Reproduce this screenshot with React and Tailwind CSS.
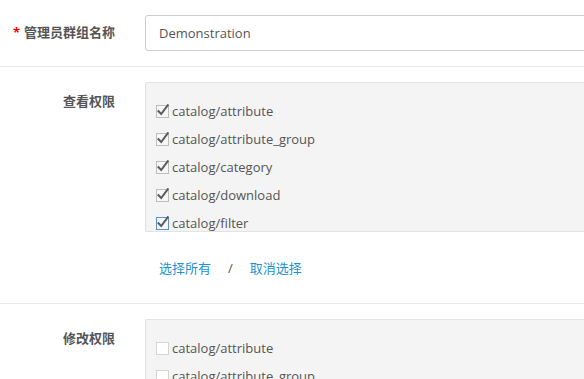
import React from "react";

const items = [
  "catalog/attribute",
  "catalog/attribute_group",
  "catalog/category",
  "catalog/download",
  "catalog/filter",
  "catalog/information",
];

function Check({ checked, focus }) {
  return (
    <svg width="14" height="14" viewBox="0 0 14 14" className="shrink-0">
      <rect
        x="0.5"
        y="1.5"
        width="12"
        height="12"
        fill={checked ? "#f6f6f6" : "#ffffff"}
        stroke={focus ? "#5b8fd6" : checked ? "#bdbdbd" : "#d4d4d4"}
        strokeWidth="1"
      />
      {checked && (
        <path
          d="M2.5 7.2 L5.2 10 L11.8 1.2"
          fill="none"
          stroke="#5a5a5a"
          strokeWidth="2"
          strokeLinecap="square"
        />
      )}
    </svg>
  );
}

function Box({ checked }) {
  return (
    <div className="h-[150px] overflow-hidden rounded-[2px] border border-[#e3e3e3] bg-[#f4f4f4] pl-[10px] pt-[18px]">
      <div className="flex flex-col gap-[8px]">
        {items.map((t, i) => (
          <div key={t} className="flex h-[20px] items-center gap-[2px] text-[13px] text-[#555]">
            <Check checked={checked} focus={checked && i === 4} />
            <span className="leading-[20px]">{t}</span>
          </div>
        ))}
      </div>
    </div>
  );
}

export default function App() {
  return (
    <div
      className="h-[379px] w-[584px] overflow-hidden bg-white"
      style={{ fontFamily: '"Open Sans", "Noto Sans CJK SC", sans-serif' }}
    >
      <div className="w-[900px]">
        <div className="flex border-b border-[#ebebeb] py-[15px]">
          <div className="flex w-[130px] items-center justify-end pr-[15px] text-[13px] font-bold text-[#555]">
            <span className="mr-[4px] text-[#f00]">*</span>
            管理员群组名称
          </div>
          <div className="flex-1 px-[15px]">
            <div className="flex h-[36px] items-center rounded-[3px] border border-[#ccc] bg-white pl-[13px] pt-[1px] text-[13px] text-[#555]">
              Demonstration
            </div>
          </div>
        </div>

        <div className="flex border-b border-[#ebebeb] pb-[24px] pt-[15px]">
          <div className="w-[130px] pr-[15px] pt-[9px] text-right text-[13px] font-bold leading-[20px] text-[#555]">
            查看权限
          </div>
          <div className="flex-1 px-[15px]">
            <Box checked />
            <div className="mt-[27px] flex h-[20px] items-center pl-[14px] text-[13px] text-[#555]">
              <span className="text-[#1e91cf]">选择所有</span>
              <span className="ml-[17px] mr-[17px]">/</span>
              <span className="text-[#1e91cf]">取消选择</span>
            </div>
          </div>
        </div>

        <div className="flex pt-[15px]">
          <div className="w-[130px] pr-[15px] pt-[9px] text-right text-[13px] font-bold leading-[20px] text-[#555]">
            修改权限
          </div>
          <div className="flex-1 px-[15px]">
            <Box checked={false} />
          </div>
        </div>
      </div>
    </div>
  );
}
